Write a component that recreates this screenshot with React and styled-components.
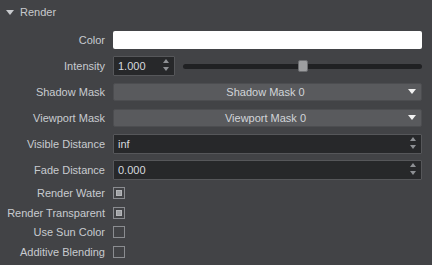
import React from "react";
import styled, { createGlobalStyle } from "styled-components";

const Global = createGlobalStyle`
  html, body { margin: 0; padding: 0; background: #424346; }
  body { width: 432px; height: 265px; overflow: hidden; font-family: "Liberation Sans", Arial, sans-serif; font-size: 11px; color: #c6c8cc; }
`;

const Panel = styled.div`
  display: flex;
  flex-direction: column;
  width: 432px;
  height: 265px;
  background: #424346;
`;

const Header = styled.div`
  display: flex;
  align-items: center;
  gap: 6px;
  height: 24px;
  padding-left: 6px;
  color: #c8cacd;
`;

const Caret = styled.span`
  width: 0;
  height: 0;
  border-left: 4px solid transparent;
  border-right: 4px solid transparent;
  border-top: 5px solid #c8cacd;
  margin-top: 1px;
`;

const Rows = styled.div`
  display: flex;
  flex-direction: column;
  padding-top: 3px;
`;

const Row = styled.div`
  display: grid;
  grid-template-columns: 105px 309px;
  column-gap: 8px;
  align-items: center;
  height: ${(p) => p.$h}px;
`;

const Label = styled.div`
  text-align: right;
  white-space: nowrap;
  color: #c8cbd0;
`;

const ColorSwatch = styled.div`
  height: 18px;
  background: #ffffff;
  border-radius: 2px;
`;

const Inline = styled.div`
  display: flex;
  align-items: center;
  gap: 8px;
`;

const Spin = styled.div`
  position: relative;
  box-sizing: border-box;
  display: flex;
  align-items: center;
  height: 20px;
  width: ${(p) => (p.$w ? `${p.$w}px` : "100%")};
  background: #27282a;
  border: 1px solid #56575a;
  border-radius: 1px;
  padding-left: 4px;
  color: #d6d9de;
`;

const Arrows = styled.div`
  position: absolute;
  right: 5px;
  top: 2px;
  display: flex;
  flex-direction: column;
  gap: 4px;
`;

const Up = styled.span`
  width: 0;
  height: 0;
  border-left: 3.5px solid transparent;
  border-right: 3.5px solid transparent;
  border-bottom: 4px solid #8e9094;
`;

const Down = styled(Up)`
  border-bottom: none;
  border-top: 4px solid #8e9094;
`;

const SliderWrap = styled.div`
  position: relative;
  flex: 1;
  height: 14px;
  display: flex;
  align-items: center;
`;

const Track = styled.div`
  width: 100%;
  height: 5px;
  border-radius: 3px;
  background: #202123;
`;

const Thumb = styled.div`
  position: absolute;
  top: 1px;
  width: 10px;
  height: 12px;
  box-sizing: border-box;
  background: #9d9ea0;
  border: 1px solid #6c6d70;
  border-radius: 2px;
`;

const Select = styled.div`
  position: relative;
  box-sizing: border-box;
  height: 18px;
  display: flex;
  align-items: center;
  justify-content: center;
  background: #595a5d;
  border: 1px solid #4c4d50;
  border-radius: 2px;
  color: #d2d5d9;
  padding-right: 4px;
`;

const SelectArrow = styled.span`
  position: absolute;
  right: 5px;
  top: 5px;
  width: 0;
  height: 0;
  border-left: 4.5px solid transparent;
  border-right: 4.5px solid transparent;
  border-top: 5px solid #f2f2f2;
`;

const Check = styled.div`
  box-sizing: border-box;
  width: 12px;
  height: 12px;
  border: 1px solid #8a8c90;
  display: flex;
  align-items: center;
  justify-content: center;
  &::after {
    content: "";
    display: ${(p) => (p.$on ? "block" : "none")};
    width: 6px;
    height: 6px;
    box-sizing: border-box;
    background: #9fa1a4;
    border: 1px solid #b4b6b9;
  }
`;

const Spacer = styled.div`
  height: 0.5px;
`;

const Arrow2 = () => (
  <Arrows>
    <Up />
    <Down />
  </Arrows>
);

const checks = [
  ["Render Water", true],
  ["Render Transparent", true],
  ["Use Sun Color", false],
  ["Additive Blending", false],
];

export default function App() {
  const intensity = 0.5;
  return (
    <>
      <Global />
      <Panel>
        <Header>
          <Caret />
          <span>Render</span>
        </Header>
        <Rows>
          <Row $h={26}>
            <Label>Color</Label>
            <ColorSwatch />
          </Row>
          <Row $h={26}>
            <Label>Intensity</Label>
            <Inline>
              <Spin $w={62}>
                1.000
                <Arrow2 />
              </Spin>
              <SliderWrap>
                <Track />
                <Thumb style={{ left: `calc(${intensity * 100}% - 5px)` }} />
              </SliderWrap>
            </Inline>
          </Row>
          <Row $h={26}>
            <Label>Shadow Mask</Label>
            <Select>
              Shadow Mask 0
              <SelectArrow />
            </Select>
          </Row>
          <Row $h={26}>
            <Label>Viewport Mask</Label>
            <Select>
              Viewport Mask 0
              <SelectArrow />
            </Select>
          </Row>
          <Row $h={26}>
            <Label>Visible Distance</Label>
            <Spin>
              inf
              <Arrow2 />
            </Spin>
          </Row>
          <Row $h={26}>
            <Label>Fade Distance</Label>
            <Spin>
              0.000
              <Arrow2 />
            </Spin>
          </Row>
          <Spacer />
          {checks.map(([l, on]) => (
            <Row $h={19.5} key={l}>
              <Label>{l}</Label>
              <Check $on={on} />
            </Row>
          ))}
        </Rows>
      </Panel>
    </>
  );
}
